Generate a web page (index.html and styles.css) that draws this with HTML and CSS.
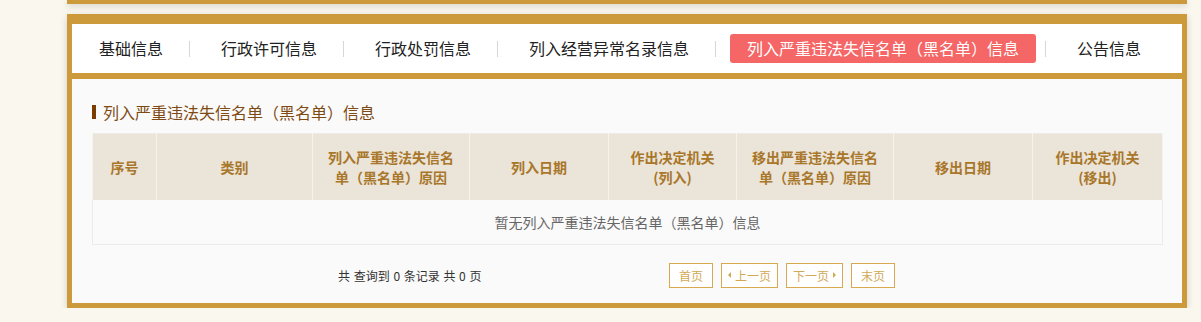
FILE: index.html
```html
<!DOCTYPE html>
<html lang="zh-CN">
<head>
<meta charset="utf-8">
<title>列入严重违法失信名单（黑名单）信息</title>
<link rel="stylesheet" href="styles.css">
</head>
<body>
<div class="page">
  <div class="prev-box"></div>
  <div class="box">
    <nav class="tabs">
      <span class="tab first">基础信息</span>
      <span class="sep"></span>
      <span class="tab">行政许可信息</span>
      <span class="sep"></span>
      <span class="tab">行政处罚信息</span>
      <span class="sep"></span>
      <span class="tab">列入经营异常名录信息</span>
      <span class="sep"></span>
      <span class="tab active">列入严重违法失信名单（黑名单）信息</span>
      <span class="sep"></span>
      <span class="tab">公告信息</span>
    </nav>
    <div class="content">
      <h2 class="title"><span class="bar"></span>列入严重违法失信名单（黑名单）信息</h2>
      <table class="grid">
        <colgroup>
          <col class="c1"><col class="c2"><col class="c3"><col class="c4">
          <col class="c5"><col class="c6"><col class="c7"><col class="c8">
        </colgroup>
        <thead>
          <tr>
            <th>序号</th>
            <th>类别</th>
            <th>列入严重违法失信名<br>单（黑名单）原因</th>
            <th>列入日期</th>
            <th>作出决定机关<br>(列入)</th>
            <th>移出严重违法失信名<br>单（黑名单）原因</th>
            <th>移出日期</th>
            <th>作出决定机关<br>(移出)</th>
          </tr>
        </thead>
        <tbody>
          <tr><td colspan="8" class="empty">暂无列入严重违法失信名单（黑名单）信息</td></tr>
        </tbody>
      </table>
      <div class="footer">
        <span class="count">共 查询到 0 条记录 共 0 页</span>
        <div class="pager">
          <span class="pbtn">首页</span>
          <span class="pbtn"><span class="tri left"></span>上一页</span>
          <span class="pbtn">下一页<span class="tri right"></span></span>
          <span class="pbtn">末页</span>
        </div>
      </div>
    </div>
  </div>
</div>
</body>
</html>
```
FILE: styles.css
```css
html, body {
  margin: 0;
  padding: 0;
}
body {
  background: #faf7ef;
  font-family: "Noto Sans CJK SC", "Noto Sans", "Liberation Sans", sans-serif;
  color: #333;
}
.page {
  width: 1120px;
  margin-left: 67px;
}
.prev-box {
  height: 4px;
  background: #cc9a3a;
  box-shadow: 0 2px 6px rgba(0, 0, 0, 0.18);
  margin-bottom: 10px;
}
.box {
  background: #cc9a3a;
  padding: 10px 5px 5px 5px;
  box-shadow: 0 2px 7px rgba(0, 0, 0, 0.16);
}
.tabs {
  background: #fff;
  height: 49px;
  display: flex;
  align-items: center;
  margin-bottom: 6px;
}
.tab {
  font-size: 16px;
  line-height: 29px;
  height: 29px;
  padding: 0 17px;
  margin: 0 9px 0 14px;
  white-space: nowrap;
  color: #222;
  border-radius: 3px;
}
.tab.first {
  margin-left: 10px;
}
.tab.active {
  background: #f56666;
  color: #fff;
}
.sep {
  width: 1px;
  height: 16px;
  background: #d6d6d6;
  flex: none;
}
.content {
  background: #fafafa;
  height: 224px;
  padding: 23px 20px 0 20px;
  box-sizing: border-box;
}
.title {
  margin: 0 0 11px 0;
  font-size: 16px;
  font-weight: normal;
  line-height: 20px;
  height: 20px;
  color: #7e4a14;
  display: flex;
  align-items: center;
}
.bar {
  width: 4px;
  height: 14px;
  background: #7a3c00;
  margin-right: 7px;
}
.grid {
  width: 1070px;
  table-layout: fixed;
  border-collapse: collapse;
  border: 1px solid #ebebeb;
}
.c1 { width: 64px; }
.c2 { width: 156px; }
.c3 { width: 157px; }
.c4 { width: 139px; }
.c5 { width: 128px; }
.c6 { width: 157px; }
.c7 { width: 139px; }
.c8 { width: 130px; }
.grid th {
  background: #ebe4d9;
  color: #a8772a;
  font-size: 14px;
  font-weight: bold;
  line-height: 20px;
  height: 66px;
  padding: 0 6px;
  box-sizing: border-box;
  border-left: 1px solid #f6f3ee;
  border-right: 1px solid #f6f3ee;
  text-align: center;
  vertical-align: middle;
}
.grid td.empty {
  height: 44px;
  text-align: center;
  font-size: 14px;
  color: #666;
  background: #fafafa;
  padding: 0;
}
.footer {
  display: flex;
  align-items: center;
  height: 25px;
  margin-top: 18px;
  padding-left: 246px;
}
.count {
  font-size: 12px;
  color: #333;
  width: 331px;
  flex: none;
  white-space: pre;
  word-spacing: 1px;
}
.pager {
  display: flex;
  gap: 8px;
}
.pbtn {
  display: flex;
  align-items: center;
  justify-content: center;
  height: 25px;
  box-sizing: border-box;
  border: 1px solid #d8a94e;
  color: #d3a855;
  font-size: 12px;
  padding: 0 9px;
  background: #fff;
}
.pbtn:nth-child(2), .pbtn:nth-child(3) {
  padding: 0 6px;
}
.tri {
  width: 0;
  height: 0;
  border-top: 3px solid transparent;
  border-bottom: 3px solid transparent;
}
.tri.left {
  border-right: 3px solid #d3a855;
  margin-right: 4px;
}
.tri.right {
  border-left: 3px solid #d3a855;
  margin-left: 4px;
}
```
